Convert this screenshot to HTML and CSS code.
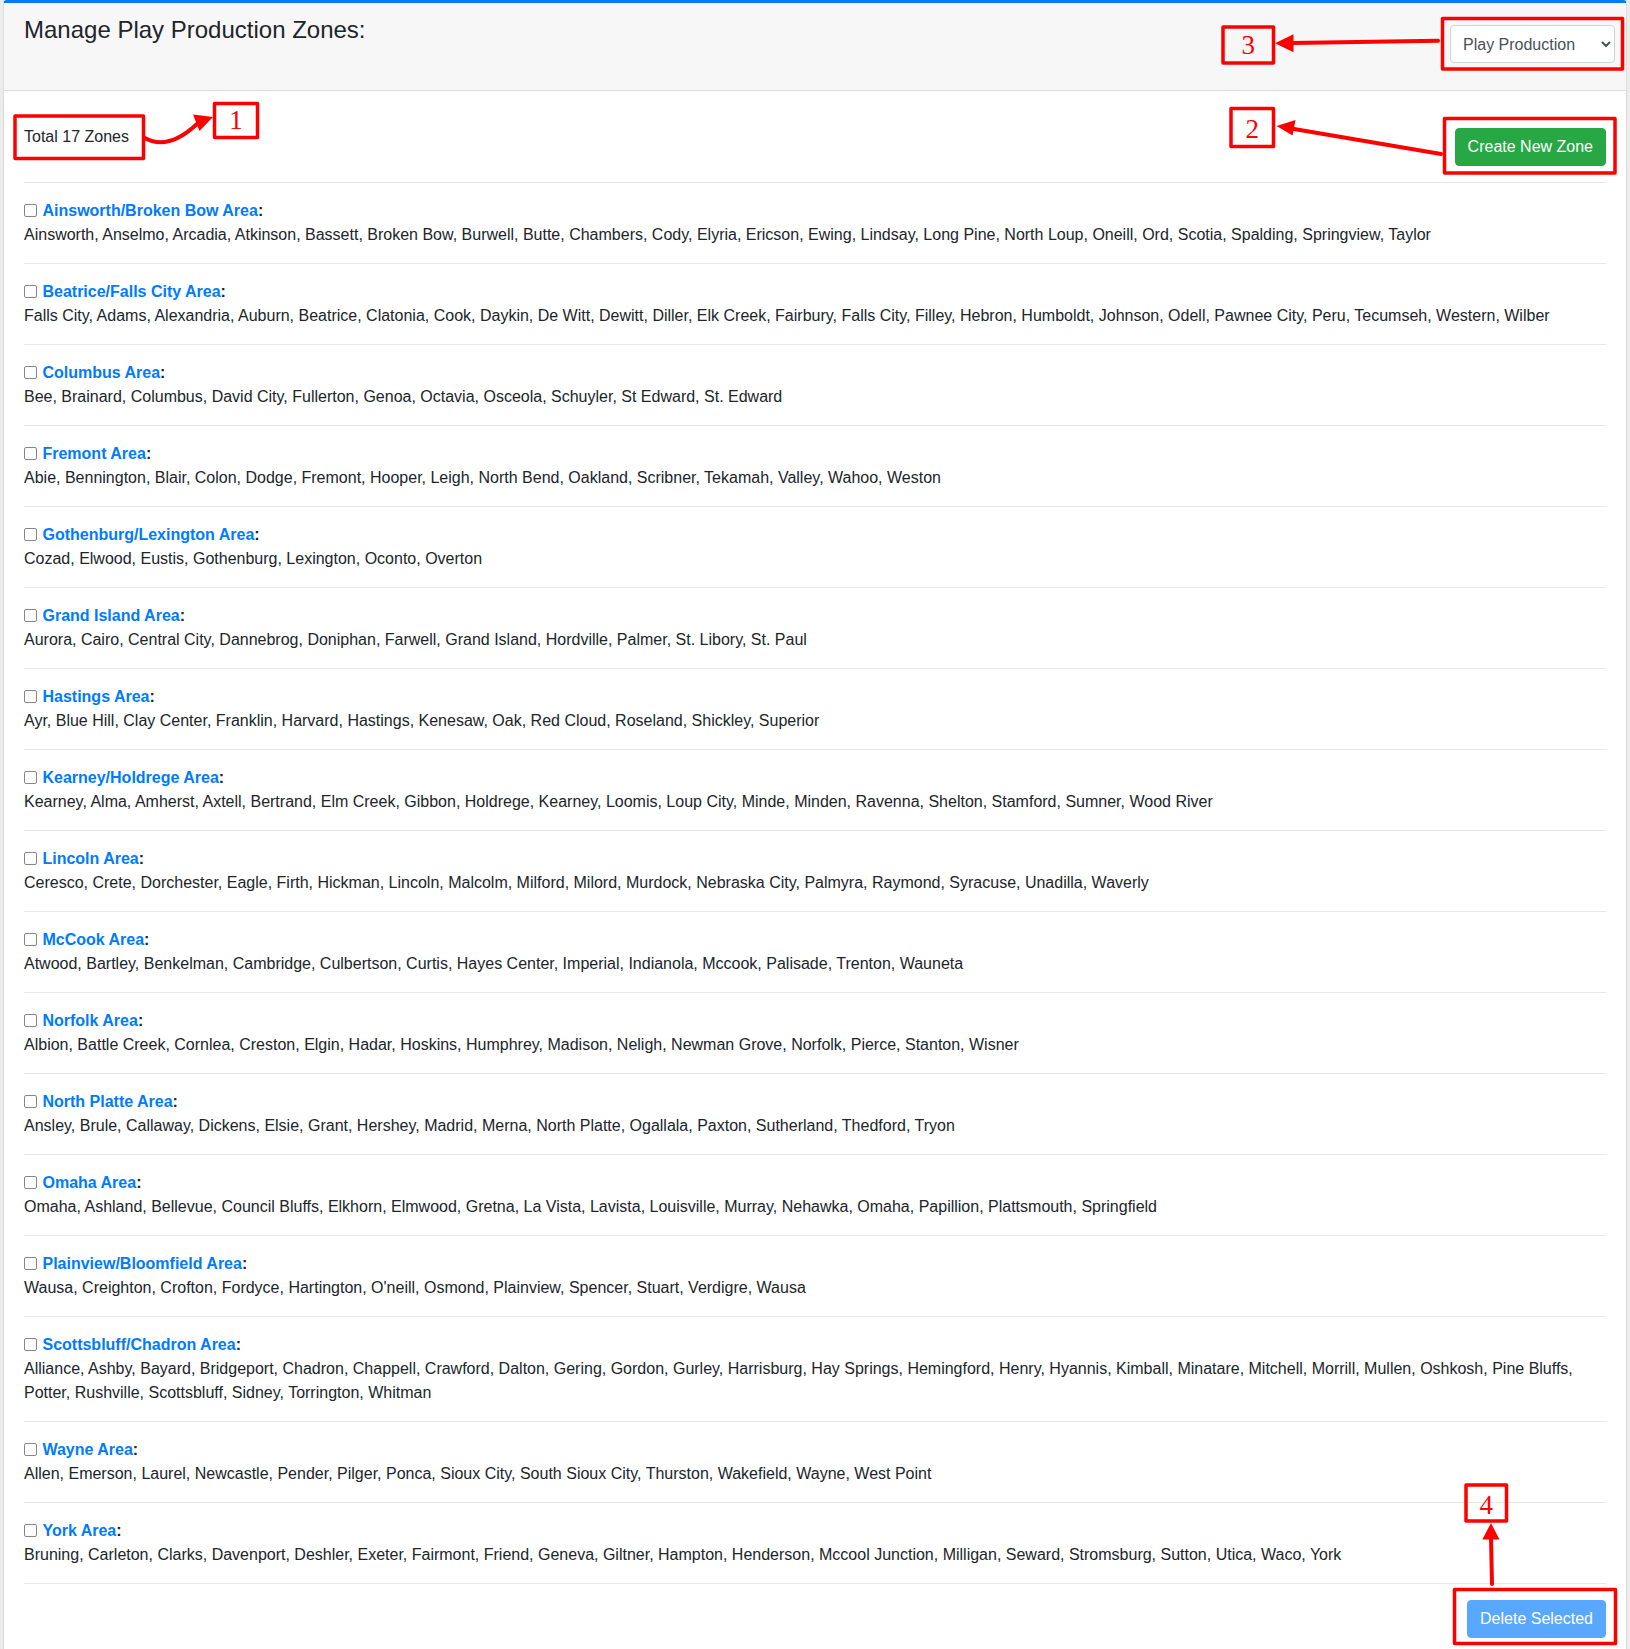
FILE: index.html
```html
<!DOCTYPE html>
<html lang="en">
<head>
<meta charset="utf-8">
<title>Manage Play Production Zones</title>
<link rel="stylesheet" href="styles.css">
</head>
<body>
<div class="card">
  <div class="card-header">
    <h4 class="title">Manage Play Production Zones:</h4>
    <select class="form-select">
      <option>Play Production</option>
    </select>
  </div>
  <div class="card-body">
    <div class="top-row">
      <div class="total">Total 17 Zones</div>
      <button class="btn btn-success">Create New Zone</button>
    </div>
    <hr class="sep">

    <div class="zone"><div class="zone-title"><input type="checkbox" class="chk"> <b><a href="#">Ainsworth/Broken Bow Area</a>:</b></div><div class="cities">Ainsworth, Anselmo, Arcadia, Atkinson, Bassett, Broken Bow, Burwell, Butte, Chambers, Cody, Elyria, Ericson, Ewing, Lindsay, Long Pine, North Loup, Oneill, Ord, Scotia, Spalding, Springview, Taylor</div></div>
    <hr class="sep">
    <div class="zone"><div class="zone-title"><input type="checkbox" class="chk"> <b><a href="#">Beatrice/Falls City Area</a>:</b></div><div class="cities">Falls City, Adams, Alexandria, Auburn, Beatrice, Clatonia, Cook, Daykin, De Witt, Dewitt, Diller, Elk Creek, Fairbury, Falls City, Filley, Hebron, Humboldt, Johnson, Odell, Pawnee City, Peru, Tecumseh, Western, Wilber</div></div>
    <hr class="sep">
    <div class="zone"><div class="zone-title"><input type="checkbox" class="chk"> <b><a href="#">Columbus Area</a>:</b></div><div class="cities">Bee, Brainard, Columbus, David City, Fullerton, Genoa, Octavia, Osceola, Schuyler, St Edward, St. Edward</div></div>
    <hr class="sep">
    <div class="zone"><div class="zone-title"><input type="checkbox" class="chk"> <b><a href="#">Fremont Area</a>:</b></div><div class="cities">Abie, Bennington, Blair, Colon, Dodge, Fremont, Hooper, Leigh, North Bend, Oakland, Scribner, Tekamah, Valley, Wahoo, Weston</div></div>
    <hr class="sep">
    <div class="zone"><div class="zone-title"><input type="checkbox" class="chk"> <b><a href="#">Gothenburg/Lexington Area</a>:</b></div><div class="cities">Cozad, Elwood, Eustis, Gothenburg, Lexington, Oconto, Overton</div></div>
    <hr class="sep">
    <div class="zone"><div class="zone-title"><input type="checkbox" class="chk"> <b><a href="#">Grand Island Area</a>:</b></div><div class="cities">Aurora, Cairo, Central City, Dannebrog, Doniphan, Farwell, Grand Island, Hordville, Palmer, St. Libory, St. Paul</div></div>
    <hr class="sep">
    <div class="zone"><div class="zone-title"><input type="checkbox" class="chk"> <b><a href="#">Hastings Area</a>:</b></div><div class="cities">Ayr, Blue Hill, Clay Center, Franklin, Harvard, Hastings, Kenesaw, Oak, Red Cloud, Roseland, Shickley, Superior</div></div>
    <hr class="sep">
    <div class="zone"><div class="zone-title"><input type="checkbox" class="chk"> <b><a href="#">Kearney/Holdrege Area</a>:</b></div><div class="cities">Kearney, Alma, Amherst, Axtell, Bertrand, Elm Creek, Gibbon, Holdrege, Kearney, Loomis, Loup City, Minde, Minden, Ravenna, Shelton, Stamford, Sumner, Wood River</div></div>
    <hr class="sep">
    <div class="zone"><div class="zone-title"><input type="checkbox" class="chk"> <b><a href="#">Lincoln Area</a>:</b></div><div class="cities">Ceresco, Crete, Dorchester, Eagle, Firth, Hickman, Lincoln, Malcolm, Milford, Milord, Murdock, Nebraska City, Palmyra, Raymond, Syracuse, Unadilla, Waverly</div></div>
    <hr class="sep">
    <div class="zone"><div class="zone-title"><input type="checkbox" class="chk"> <b><a href="#">McCook Area</a>:</b></div><div class="cities">Atwood, Bartley, Benkelman, Cambridge, Culbertson, Curtis, Hayes Center, Imperial, Indianola, Mccook, Palisade, Trenton, Wauneta</div></div>
    <hr class="sep">
    <div class="zone"><div class="zone-title"><input type="checkbox" class="chk"> <b><a href="#">Norfolk Area</a>:</b></div><div class="cities">Albion, Battle Creek, Cornlea, Creston, Elgin, Hadar, Hoskins, Humphrey, Madison, Neligh, Newman Grove, Norfolk, Pierce, Stanton, Wisner</div></div>
    <hr class="sep">
    <div class="zone"><div class="zone-title"><input type="checkbox" class="chk"> <b><a href="#">North Platte Area</a>:</b></div><div class="cities">Ansley, Brule, Callaway, Dickens, Elsie, Grant, Hershey, Madrid, Merna, North Platte, Ogallala, Paxton, Sutherland, Thedford, Tryon</div></div>
    <hr class="sep">
    <div class="zone"><div class="zone-title"><input type="checkbox" class="chk"> <b><a href="#">Omaha Area</a>:</b></div><div class="cities">Omaha, Ashland, Bellevue, Council Bluffs, Elkhorn, Elmwood, Gretna, La Vista, Lavista, Louisville, Murray, Nehawka, Omaha, Papillion, Plattsmouth, Springfield</div></div>
    <hr class="sep">
    <div class="zone"><div class="zone-title"><input type="checkbox" class="chk"> <b><a href="#">Plainview/Bloomfield Area</a>:</b></div><div class="cities">Wausa, Creighton, Crofton, Fordyce, Hartington, O'neill, Osmond, Plainview, Spencer, Stuart, Verdigre, Wausa</div></div>
    <hr class="sep">
    <div class="zone"><div class="zone-title"><input type="checkbox" class="chk"> <b><a href="#">Scottsbluff/Chadron Area</a>:</b></div><div class="cities">Alliance, Ashby, Bayard, Bridgeport, Chadron, Chappell, Crawford, Dalton, Gering, Gordon, Gurley, Harrisburg, Hay Springs, Hemingford, Henry, Hyannis, Kimball, Minatare, Mitchell, Morrill, Mullen, Oshkosh, Pine Bluffs, Potter, Rushville, Scottsbluff, Sidney, Torrington, Whitman</div></div>
    <hr class="sep">
    <div class="zone"><div class="zone-title"><input type="checkbox" class="chk"> <b><a href="#">Wayne Area</a>:</b></div><div class="cities">Allen, Emerson, Laurel, Newcastle, Pender, Pilger, Ponca, Sioux City, South Sioux City, Thurston, Wakefield, Wayne, West Point</div></div>
    <hr class="sep">
    <div class="zone"><div class="zone-title"><input type="checkbox" class="chk"> <b><a href="#">York Area</a>:</b></div><div class="cities">Bruning, Carleton, Clarks, Davenport, Deshler, Exeter, Fairmont, Friend, Geneva, Giltner, Hampton, Henderson, Mccool Junction, Milligan, Seward, Stromsburg, Sutton, Utica, Waco, York</div></div>
    <hr class="sep">

    <div class="bottom-row">
      <button class="btn btn-primary" disabled>Delete Selected</button>
    </div>
  </div>
</div>

<svg class="annotations" width="1630" height="1649" viewBox="0 0 1630 1649" xmlns="http://www.w3.org/2000/svg">
  <g fill="none" stroke="#ff0000" stroke-width="3.5" stroke-linejoin="round">
    <rect x="15" y="116" width="128.5" height="42.5"/>
    <rect x="214.5" y="103.5" width="43" height="34"/>
    <rect x="1231" y="108.5" width="42.5" height="38"/>
    <rect x="1444.5" y="118.5" width="170.5" height="54.5"/>
    <rect x="1223" y="27" width="50.5" height="36"/>
    <rect x="1442.5" y="18.5" width="180" height="50.5"/>
    <rect x="1466" y="1485" width="40.5" height="36"/>
    <rect x="1454.5" y="1589.5" width="161" height="54"/>
  </g>
  <g fill="none" stroke="#ff0000" stroke-width="4" stroke-linecap="round">
    <path d="M145,138 Q168,151 197,124"/>
    <line x1="1441" y1="154" x2="1294" y2="129"/>
    <line x1="1438" y1="40.7" x2="1292" y2="43"/>
    <line x1="1492" y1="1584" x2="1491" y2="1538"/>
  </g>
  <g fill="#ff0000">
    <polygon points="193,114.5 213,117 199.5,131"/>
    <polygon points="1276.5,126 1295.5,120 1292.5,135.5"/>
    <polygon points="1275,43.3 1293.5,34.3 1293.5,52.3"/>
    <polygon points="1491,1523 1482.3,1539.5 1499.5,1539.5"/>
  </g>
  <g class="digits" fill="#ff0000" text-anchor="middle">
    <text x="236" y="129.3">1</text>
    <text x="1252.3" y="137.5">2</text>
    <text x="1248.3" y="53.5">3</text>
    <text x="1486.3" y="1513.5">4</text>
  </g>
</svg>
</body>
</html>
```

FILE: styles.css
```css
html, body {
  overflow: hidden;
}

body {
  margin: 0;
  padding: 0 3px 0 3px;
  position: relative;
  background: #ececec;
  font-family: "Liberation Sans", Arial, sans-serif;
  font-size: 16px;
  line-height: 1.5;
  color: #212529;
}

.card {
  background: #fff;
  border: 1px solid #dcdcdc;
  border-top: 3px solid #007bff;
  border-radius: 4px 4px 0 0;
  min-height: 1700px;
}

.card-header {
  display: flex;
  justify-content: space-between;
  align-items: flex-start;
  background: #f7f7f7;
  border-bottom: 1px solid #dcdcdc;
  padding: 12px 11px 12px 20px;
}

.title {
  margin: 0;
  padding-top: 1px;
  font-size: 24px;
  font-weight: 500;
  line-height: 1.2;
  color: #212529;
}

.form-select {
  margin: 10px 0 15px 0;
  width: 165px;
  height: 38px;
  padding: 6px 8px 6px 8px;
  font-family: "Liberation Sans", Arial, sans-serif;
  font-size: 16px;
  line-height: 1.5;
  color: #495057;
  background-color: #fff;
  border: 1px solid #ced4da;
  border-radius: 4px;
}

.card-body {
  padding: 21px 20px 20px 20px;
}

.top-row {
  display: flex;
  justify-content: space-between;
  align-items: flex-start;
}

.total {
  margin-top: 13px;
}

.btn {
  display: inline-block;
  font-family: "Liberation Sans", Arial, sans-serif;
  font-size: 16px;
  line-height: 1.5;
  padding: 6px 12px;
  border: 1px solid transparent;
  border-radius: 4px;
  color: #fff;
  cursor: pointer;
}

.btn-success {
  margin-top: 16px;
  background: #28a745;
  border-color: #28a745;
}

.btn-primary {
  background: #007bff;
  border-color: #007bff;
}

.btn-primary:disabled {
  opacity: 0.65;
  cursor: default;
}

.sep {
  margin: 16px 0;
  border: 0;
  border-top: 1px solid rgba(0, 0, 0, 0.09);
  height: 0;
}

.zone-title {
  line-height: 24px;
}

.zone-title a {
  color: #007bff;
  text-decoration: none;
}

.chk {
  -webkit-appearance: none;
  appearance: none;
  box-sizing: border-box;
  margin: 0 1px 0 0;
  width: 13px;
  height: 13px;
  border: 1.5px solid #868690;
  border-radius: 2px;
  background: #fff;
  vertical-align: middle;
  position: relative;
  top: -1px;
}

.cities {
  line-height: 24px;
}

.bottom-row {
  display: flex;
  justify-content: flex-end;
}

.annotations {
  position: absolute;
  top: 0;
  left: 0;
  pointer-events: none;
}

.digits text {
  font-family: "Liberation Serif", "Times New Roman", serif;
  font-size: 27px;
}
```
